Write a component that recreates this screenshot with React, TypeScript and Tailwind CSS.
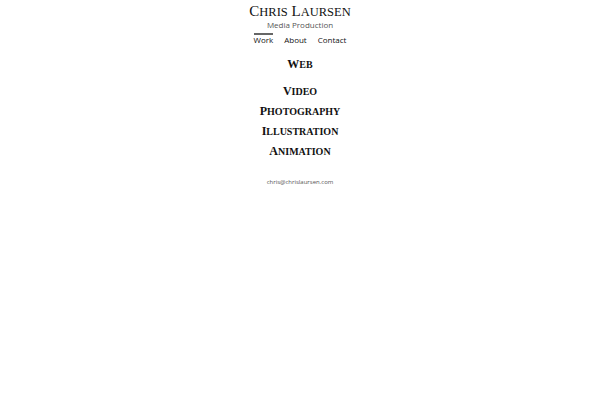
function SmallCaps({ text, big, small }: { text: string; big: string; small: string }) {
  // first letter of each word full size, the rest as smaller capitals
  return (
    <>
      {text.split(" ").map((w, i) => (
        <span key={i}>
          {i > 0 && " "}
          <span className={big}>{w[0]}</span>
          <span className={small}>{w.slice(1).toUpperCase()}</span>
        </span>
      ))}
    </>
  );
}

export default function App() {
  const categories = ["Video", "Photography", "Illustration", "Animation"];

  return (
    <div className="min-h-[400px] bg-white flex flex-col items-center text-black">
      <h1 className="mt-[2px] h-[18px] text-[15px] leading-[18px] [font-family:'Liberation_Serif',serif] text-[#111]">
        <SmallCaps text="Chris Laursen" big="text-[15px] leading-none" small="text-[12.5px] leading-none" />
      </h1>
      <p className="text-[8px] leading-[9px] text-[#555] [font-family:'Open_Sans',sans-serif]">Media Production</p>
      <nav className="mt-[4px] flex gap-[11px] text-[8px] leading-[10px] text-[#111] [font-family:'Open_Sans',sans-serif]">
        <a className="border-t-2 border-[#666]">Work</a>
        <a className="border-t-2 border-transparent">About</a>
        <a className="border-t-2 border-transparent">Contact</a>
      </nav>
      <div className="mt-[9px] flex flex-col items-center [font-family:'Liberation_Serif',serif] font-bold text-[12px] leading-[20px] text-[#111]">
        <a className="h-[20px]">
          <SmallCaps text="Web" big="text-[12px] leading-none" small="text-[10px] leading-none" />
        </a>
        <div className="mt-[7px] flex flex-col items-center">
          {categories.map((c) => (
            <a key={c} className="h-[20px]">
              <SmallCaps text={c} big="text-[12px] leading-none" small="text-[10px] leading-none" />
            </a>
          ))}
        </div>
      </div>
      <p className="mt-[17px] text-[6px] leading-[8px] text-[#555] [font-family:'Open_Sans',sans-serif]">chris@chrislaursen.com</p>
    </div>
  );
}
